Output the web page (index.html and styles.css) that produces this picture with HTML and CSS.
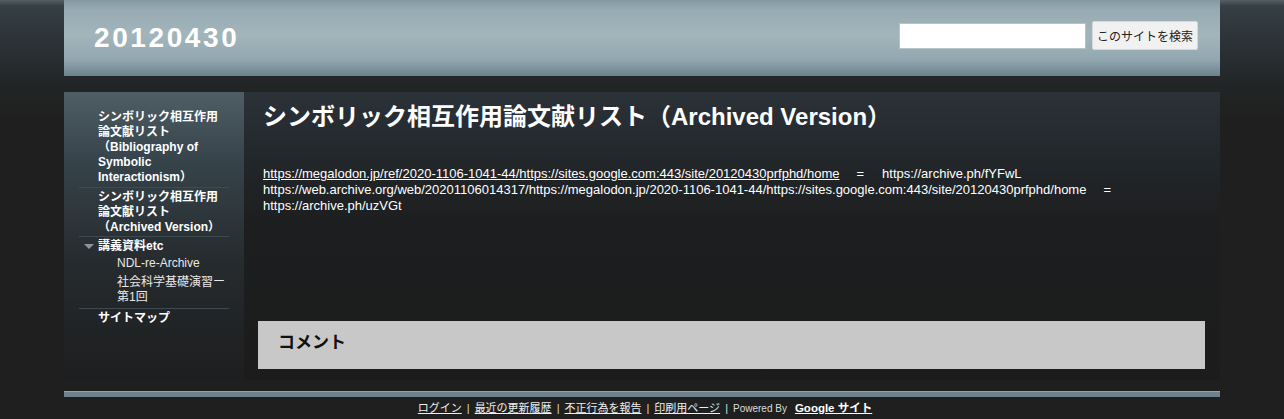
FILE: index.html
```html
<!DOCTYPE html>
<html lang="ja">
<head>
    <meta charset="UTF-8">
    <title>シンボリック相互作用論文献リスト（Archived Version） - 20120430</title>
    <link rel="stylesheet" href="styles.css">
</head>
<body>
    <div class="page">
        <div class="header">
            <a class="site-title" href="#">20120430</a>
            <form class="search">
                <input type="text" class="search-box">
                <button type="button" class="search-btn">このサイトを検索</button>
            </form>
        </div>

        <div class="main">
            <div class="sidebar">
                <ul class="nav">
                    <li class="nav-item first"><a href="#">シンボリック相互作用論文献リスト（Bibliography of Symbolic Interactionism）</a></li>
                    <li class="nav-item"><a href="#">シンボリック相互作用論文献リスト（Archived Version）</a></li>
                    <li class="nav-item open">
                        <span class="toggle"></span><a href="#">講義資料etc</a>
                        <ul class="sub">
                            <li><a href="#">NDL-re-Archive</a></li>
                            <li><a href="#">社会科学基礎演習ー第1回</a></li>
                        </ul>
                    </li>
                    <li class="nav-item"><a href="#">サイトマップ</a></li>
                </ul>
            </div>

            <div class="content">
                <h1 class="page-title">シンボリック相互作用論文献リスト（Archived Version）</h1>
                <div class="page-body">
                    <a href="#">https://megalodon.jp/ref/2020-1106-1041-44/https://sites.google.com:443/site/20120430prfphd/home</a><span class="eq">=</span>https://archive.ph/fYFwL https://web.archive.org/web/20201106014317/https://megalodon.jp/2020-1106-1041-44/https://sites.google.com:443/site/20120430prfphd/home<span class="eq">=</span> https://archive.ph/uzVGt
                </div>
                <div class="comments">
                    <h3>コメント</h3>
                </div>
            </div>
        </div>

        <div class="footer-bar"></div>
        <div class="footer">
            <a href="#">ログイン</a><span class="sep">|</span><a href="#">最近の更新履歴</a><span class="sep">|</span><a href="#">不正行為を報告</a><span class="sep">|</span><a href="#">印刷用ページ</a><span class="sep">|</span><span class="powered">Powered By</span><a class="gsites" href="#">Google サイト</a>
        </div>
    </div>
</body>
</html>
```

FILE: styles.css
```css
*{
    margin: 0;
    padding: 0;
    box-sizing: border-box;
}
body{
    min-height: 100vh;
    font-family: "Liberation Sans", "Noto Sans CJK JP", sans-serif;
    color: #fff;
    background: #1f1f1f linear-gradient(to bottom, #555e64 0px, #363f45 6px, #2c3338 40px, #222526 85px, #1f1f1f 120px) no-repeat;
}
a{
    color: #fff;
}
.page{
    width: 1156px;
    margin: 0 auto;
}

/* header */
.header{
    height: 76px;
    display: flex;
    align-items: center;
    justify-content: space-between;
    padding: 0 22px 0 30px;
    background: linear-gradient(to bottom, #8399a2 0px, #97abb3 10px, #a3b5bb 35px, #92a7b0 60px, #6a828c 76px);
}
.site-title{
    font-size: 28px;
    font-weight: bold;
    letter-spacing: 2.6px;
    text-decoration: none;
}
.search{
    display: flex;
    align-items: center;
    gap: 6px;
    margin-top: -5px;
}
.search-box{
    width: 187px;
    height: 26px;
    border: 1px solid #b7c3c8;
    background: #fff;
}
.search-btn{
    width: 106px;
    height: 29px;
    padding: 0;
    font-size: 12px;
    font-family: "Liberation Sans", "Noto Sans CJK JP", sans-serif;
    color: #222;
    background: #f1f1f1;
    border: 1px solid #d4d8da;
    border-radius: 2px;
}

/* main */
.main{
    display: flex;
    margin-top: 16px;
    min-height: 288px;
}
.sidebar{
    width: 180px;
    flex-shrink: 0;
    padding: 18px 15px 20px;
    background: linear-gradient(to bottom, #4f5d64 0px, #36434a 70px, #262b2e 170px, #1d1e1f 288px);
}
.nav{
    list-style: none;
}
.nav-item{
    position: relative;
    padding: 2px 0 1px 19px;
    border-top: 1px solid #3f4a50;
    font-size: 12px;
    font-weight: bold;
    line-height: 15px;
}
.nav-item.first{
    border-top: none;
    padding-top: 0;
    padding-bottom: 2px;
}
.nav-item a{
    text-decoration: none;
}
.toggle{
    position: absolute;
    left: 5px;
    top: 7px;
    width: 0;
    height: 0;
    border-left: 5px solid transparent;
    border-right: 5px solid transparent;
    border-top: 5px solid #8a969c;
}
.sub{
    list-style: none;
    padding-left: 19px;
}
.sub li{
    font-weight: normal;
    line-height: 15px;
    padding: 2px 0;
    color: #e8e8e8;
}
.sub li a{
    color: #e8e8e8;
}

.content{
    flex: 1;
    padding: 10px 15px 11px 14px;
    background: linear-gradient(to bottom, #2b3238 0px, #23282c 60px, #1d1e1f 130px, #1c1c1c 288px);
}
.page-title{
    font-size: 24px;
    line-height: 30px;
    padding-left: 5px;
    margin-bottom: 34px;
}
.page-body{
    padding-left: 5px;
    font-size: 13px;
    line-height: 16px;
    min-height: 155px;
}
.eq{
    margin: 0 18px 0 17px;
}
.comments{
    background: #c8c8c8;
    height: 48px;
    padding: 10px 20px 0;
}
.comments h3{
    font-size: 17px;
    line-height: 24px;
    color: #111;
}

/* footer */
.footer-bar{
    height: 6px;
    margin-top: 11px;
    background: #6c838d;
    border-top: 1px solid #8ea3ac;
}
.footer{
    text-align: center;
    font-size: 11px;
    line-height: 22px;
    color: #ddd;
    padding-left: 6px;
}
.footer a{
    color: #eee;
}
.sep{
    margin: 0 5px;
}
.powered{
    font-size: 10px;
    margin-right: 8px;
}
.footer .gsites{
    font-weight: bold;
    font-size: 11.5px;
    color: #fff;
}
```
